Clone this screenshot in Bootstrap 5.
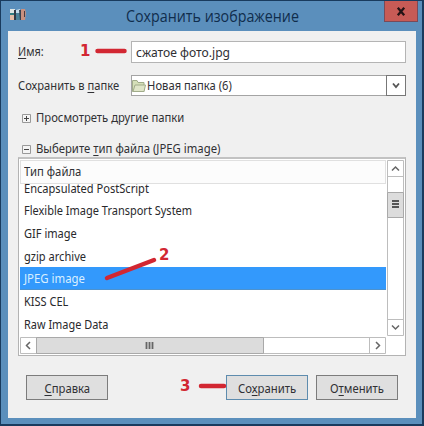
<!DOCTYPE html>
<html lang="ru">
<head>
<meta charset="utf-8">
<meta name="viewport" content="width=device-width, initial-scale=1">
<title>Сохранить изображение</title>
<link href="https://cdn.jsdelivr.net/npm/bootstrap@5.3.0/dist/css/bootstrap.min.css" rel="stylesheet">
<style>
body{width:424px;height:426px;overflow:hidden;font:12.5px/16px "Noto Sans","Open Sans",sans-serif;color:#303034;background:#193b5e}
u{text-underline-offset:2px;text-decoration-thickness:1px}
.dialog-window{width:422px;height:424px;background:#5b8fbc;border-left:1px solid #193b5e;border-top:1px solid #193b5e;box-sizing:border-box}
.title-bar{height:30px}
.title-text{font:16px/22px "Open Sans",sans-serif;color:#102d4c;left:125px;top:4px}
.app-icon{left:8px;top:7px}
.close-box{left:383px;top:0;width:34px;height:21px;background:#c75b56;border:1px solid #794a59;border-top:0}
.dialog-body{margin-left:7px;width:408px;height:387px;background:#f0f0f0;padding:10px 10px 0 10px}
.field-label{width:113px;white-space:nowrap}
.file-input{width:275px;height:22px;border:1px solid #b4b4b4;background:#fff;padding:1px 0 0 4px}
.form-line{margin-top:12px}
.folder-select{width:275px;height:21px;border:1px solid #a4a4a4;background:#fff}
.drop-box{width:20px;height:21px;border:1px solid #777;margin:-1px -1px -1px auto;background:#fff}
.expander{height:18px;padding-left:4px;gap:5px;margin-top:13px;white-space:nowrap}
.expander.open{margin-bottom:-1px}
.file-list{width:388px;height:199px;border:1px solid #b3b3b3;border-top:2px solid #c2c2c2;background:#fff;padding:1px}
.list-pane{width:366px}
.list-head{height:24px;border:1px solid #e0e0e0;background:#fcfcfc;padding:3px 0 0 3px}
.rows-view{height:152px}
.rows-track{margin-top:-7.5px}
.file-row{height:22.7px;line-height:23.5px;padding-left:4px;white-space:nowrap;color:#29292c}
.file-row.selected{background:#3399fc;color:#d9efff;box-shadow:inset 0 -1px #4d92ce}
.button-line{padding-left:8px;margin-top:19px}
.dlg-btn{width:82px;height:25px;border:1px solid #7c7c7c;border-radius:0;background:#dfdfdf;font:inherit;color:#303034;padding:2px 0 0;line-height:21px}
.dlg-btn .fit{transform-origin:50% 50%}
.dlg-btn.default{border-color:#5e8cae;margin-left:118px}
.fit{display:inline-block;transform-origin:0 50%;white-space:nowrap}
.notes{left:0;top:0;pointer-events:none}
</style>
<script src="https://cdn.jsdelivr.net/npm/bootstrap@5.3.0/dist/js/bootstrap.bundle.min.js"></script>
</head>
<body class="m-0 position-relative">
<main class="dialog-window">
 <header class="title-bar position-relative">
  <svg class="app-icon position-absolute" width="18" height="14" viewBox="0 0 18 14"><path fill="#dfe6e4" d="M1 1h5v5H1z"/><path fill="#327e83" d="M1 5h4v3H1z"/><path fill="#e3bca6" d="M1 7h4v5H1z"/><path fill="#303b48" d="M5 2h3v10H5z"/><path fill="#c6ddec" d="M7 2l4-1v5H7z"/><path fill="#4a8299" d="M7 5h4v7H7z"/><path fill="#354150" d="M10 2h3v10h-2z"/><path fill="#c9907f" d="M12 1h4l1 4-1 7h-4z"/><path fill="#493b42" d="M15 3h1v6h-1z"/></svg>
  <div class="title-text position-absolute"><span class="fit" data-width="173">Сохранить изображение</span></div>
  <div class="close-box position-absolute d-flex align-items-center justify-content-center"><svg width="10" height="9" viewBox="0 0 10 9"><path d="M1.800 .8l6.400 7.400M8.200 .8L1.800 8.200" stroke="#241315" stroke-width="2.300"/></svg></div>
 </header>
 <section class="dialog-body">
  <div class="d-flex align-items-center"><div class="field-label"><span class="fit" data-width="26"><u>И</u>мя:</span></div><div class="file-input d-flex align-items-center"><span class="fit" data-width="94">сжатое фото.jpg</span></div></div>
  <div class="form-line d-flex align-items-center"><div class="field-label"><span class="fit" data-width="101">Сохранить в <u>п</u>апке</span></div>
   <div class="folder-select d-flex align-items-center"><svg width="14" height="14" viewBox="0 0 14 14" class="flex-shrink-0"><path d="M.5 12.500v-11h4.500l1 2h6v9z" fill="#d5dfb8" stroke="#a1ac8a"/><path d="M1 12.500l2-6.500h10.500l-1.500 6.500z" fill="#dfe5c8" stroke="#a1ac8a"/></svg><span class="fit ms-0 ps-0" data-width="86">&hairsp;Новая папка (6)</span>
   <div class="drop-box d-flex align-items-center justify-content-center"><svg width="8" height="7"><path d="M1 1.500l3 3.500 3-3.500" fill="none" stroke="#555" stroke-width="1.800"/></svg></div></div></div>
  <div class="expander d-flex align-items-center"><svg width="9" height="9"><path d="M.5.5h8v8h-8z" fill="#f4f4f4" stroke="#999"/><path d="M2 4.500h5M4.500 2v5" stroke="#444"/></svg><span class="fit" data-width="148">Просмотреть другие папки</span></div>
  <div class="expander open d-flex align-items-center"><svg width="9" height="9"><path d="M.5.5h8v8h-8z" fill="#f4f4f4" stroke="#999"/><path d="M2 4.500h5" stroke="#444"/></svg><span class="fit" data-width="184">Выберите <u>т</u>ип файла (JPEG image)</span></div>
  <div class="file-list">
   <div class="d-flex">
    <div class="list-pane">
     <div class="list-head"><span class="fit" data-width="57">Тип файла</span></div>
     <div class="rows-view overflow-hidden"><div class="rows-track">
      <div class="file-row"><span class="fit" data-width="125">Encapsulated PostScript</span></div>
      <div class="file-row"><span class="fit" data-width="168">Flexible Image Transport System</span></div>
      <div class="file-row"><span class="fit" data-width="53">GIF image</span></div>
      <div class="file-row"><span class="fit" data-width="62">gzip archive</span></div>
      <div class="file-row selected"><span class="fit" data-width="61">JPEG image</span></div>
      <div class="file-row"><span class="fit" data-width="44">KISS CEL</span></div>
      <div class="file-row"><span class="fit" data-width="84">Raw Image Data</span></div>
     </div></div>
    </div>
    <svg class="ms-auto" width="17" height="176"><path d="M.5.5h16v175H.5z" fill="#fff" stroke="#bdbdbd"/><path d="M.5 16.500h16M.5 159.500h16" stroke="#bdbdbd"/><path d="M.5 32.500h16v25H.5z" fill="#dcdcdc" stroke="#a9a9a9"/><path d="M5 10.500l3.500-3.500 3.500 3.500M5 165.500l3.500 3.500 3.500-3.500" fill="none" stroke="#666" stroke-width="1.500"/><path d="M5 41h7M5 44h7M5 47h7" stroke="#555" stroke-width="1.800"/></svg>
   </div>
   <svg class="d-block mt-0" width="366" height="18"><path d="M.5 1.500h365v16H.5z" fill="#fff" stroke="#bdbdbd"/><path d="M349.500 1.500v16" stroke="#bdbdbd"/><path d="M16.500 1.500h227v16h-227z" fill="#dcdcdc" stroke="#a9a9a9"/><path d="M10 6L6.500 9.500 10 13M356 6l3.500 3.500L356 13" fill="none" stroke="#666" stroke-width="1.500"/><path d="M126.500 6v7M129.500 6v7M132.500 6v7" stroke="#666" stroke-width="1.800"/></svg>
  </div>
  <div class="button-line d-flex"><button class="btn dlg-btn"><span class="fit" data-width="46"><u>С</u>правка</span></button><button class="btn dlg-btn default"><span class="fit" data-width="58">Со<u>х</u>ранить</span></button><button class="btn dlg-btn ms-2"><span class="fit" data-width="54">О<u>т</u>менить</span></button></div>
 </section>
</main>
<svg class="notes position-absolute" width="424" height="426"><g stroke="#d22732" stroke-width="4.500" stroke-linecap="round"><path d="M97.500 51h27M107 278l47-18M201 386h23"/></g><g fill="#d22732" font-family="DejaVu Sans,sans-serif" font-weight="bold" font-size="15"><text x="80" y="56">1</text><text x="159" y="260">2</text><text x="180" y="391">3</text></g></svg>
<script>
document.querySelectorAll('[data-width]').forEach(e=>{e.style.transform=`scaleX(${e.dataset.width/e.offsetWidth})`});
</script>
</body>
</html>
